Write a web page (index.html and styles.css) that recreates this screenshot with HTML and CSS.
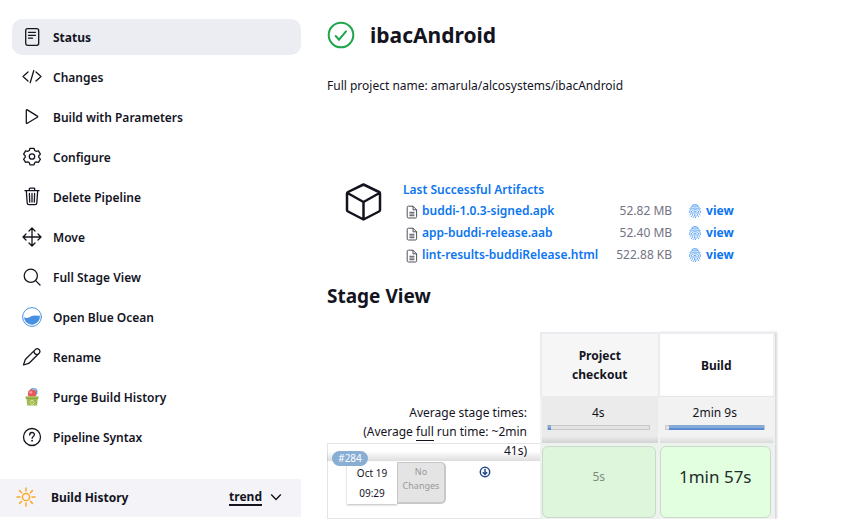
FILE: index.html
```html
<!DOCTYPE html>
<html lang="en">
<head>
<meta charset="utf-8">
<title>ibacAndroid</title>
<link rel="stylesheet" href="styles.css">
</head>
<body>
<svg class="defs" width="0" height="0" aria-hidden="true">
  <symbol id="file" viewBox="0 0 12 14">
    <path d="M2.5 1.2H7l3.6 3.6v6.900a1.300 1.300 0 0 1-1.300 1.300H2.500a1.300 1.300 0 0 1-1.300-1.300V2.500a1.300 1.300 0 0 1 1.300-1.300zM7 1.200v3.600h3.600M3.400 7.300h5M3.400 9h5M3.400 10.700h5" fill="none" stroke="#3c3c49" stroke-width=".9"/>
  </symbol>
  <symbol id="finger" viewBox="0 0 24 28">
    <g fill="none" stroke="currentColor" stroke-width="1.300" stroke-linecap="round">
      <path d="M6 3C10 .5 14 .5 18 3M1.500 9.500C4 5.500 8 4.200 12 4.200s8 1.300 10.500 5.300M1 17c0-6 4-9 11-9s11 3 11 9M2 22c2.500-2 2.500-4 2.500-5.500C4.500 13 8 11.500 12 11.500s7.500 1.500 7.500 5c0 2 0 3.500 2.500 5.500M4.500 25.500C8 22 8 19 8 17c0-2.500 8-2.500 8 0 0 3 .5 5.500 3.500 8.500M8.500 27.200c3-3 3.500-6.500 3.500-10M13 27.500c.7-1.500 1-3 1-4.500"/>
    </g>
  </symbol>
</svg>
<div class="page">
  <aside class="side">
    <nav class="tasks">
      <a class="task current" href="#"><svg viewBox="0 0 20 20"><rect x="3.700" y="1.700" width="13" height="16.600" rx="2"/><path d="M6.500 5.300h7M6.500 8.300h7M6.500 11.200h4"/></svg>Status</a>
      <a class="task" href="#"><svg viewBox="0 0 20 20"><path d="M6 5 1 9.500 6 14M14 5l5 4.500-5 4.500M11.800 3.500 8.200 15.700"/></svg>Changes</a>
      <a class="task" href="#"><svg viewBox="0 0 20 20"><path d="M4.300 3.400v12.400q0 1 1 .5l10-6q.8-.6 0-1.200l-10-6.200q-1-.5-1 .5z"/></svg>Build with Parameters</a>
      <a class="task" href="#"><svg viewBox="0 0 20 20"><circle cx="10" cy="9.500" r="2.700"/><path d="M8 1.300h4l.7 2.200 1.300.8 2.400-.5 2 3.300-1.600 1.700v1.600l1.600 1.700-2 3.300-2.400-.5-1.300.8-.7 2.200H8l-.7-2.200-1.300-.8-2.400.5-2-3.300 1.600-1.700V8.800L1.600 7.100l2-3.300 2.400.5 1.300-.8z"/></svg>Configure</a>
      <a class="task" href="#"><svg viewBox="0 0 20 20"><path d="M3 3.700h14M4.300 3.700l.9 12.300q.1 1.700 1.800 1.700h6q1.700 0 1.800-1.700l.9-12.300M7.300 3.400V2q0-.8.800-.8h3.800q.8 0 .8.800v1.400M7.400 6.500l.3 8.500M10 6.500V15M12.600 6.500l-.3 8.500"/></svg>Delete Pipeline</a>
      <a class="task" href="#"><svg viewBox="0 0 20 20"><path d="M10 1.300v17.400M1.300 10h17.400M7 4l3-3 3 3M7 16l3 3 3-3M4 7l-3 3 3 3M16 7l3 3-3 3"/></svg>Move</a>
      <a class="task" href="#"><svg viewBox="0 0 20 20"><circle cx="8.800" cy="8.800" r="6.600"/><path d="m13.600 13.600 4.400 4.400"/></svg>Full Stage View</a>
      <a class="task" href="#"><svg class="ocean" viewBox="0 0 20 20"><circle cx="10" cy="10" r="9.400"/><path class="wave" d="M2.300 10.300c3 1.600 4.700 0 7-1.100 3-1.400 5-.6 8.600-.4A8 8 0 0 1 2.300 12z"/></svg>Open Blue Ocean</a>
      <a class="task" href="#"><svg viewBox="0 0 20 20"><path d="M13.300 2.600 4 11.700q-.8.800-1.100 1.900L1.500 18l4.400-1.400q1.100-.3 1.900-1.100l9.300-9.300c2.300-2.500-1.300-6.100-3.800-3.600zM12 4q0 3.500 3.700 3.700"/></svg>Rename</a>
      <a class="task" href="#"><svg class="basket" viewBox="0 0 20 20"><circle cx="11.500" cy="5" r="4" fill="#5d9bd5"/><path d="M9.500 3q2-2 4 0" stroke="#c5dff5" fill="none"/><circle cx="10" cy="6.700" r="4.100" fill="#e8575a"/><circle cx="8.800" cy="5.300" r="1.500" fill="#f59a98"/><path d="M4.500 11h11.300l-.7 7.600h-9.900z" fill="#a3b951"/><path d="M3.700 9.400h12.700v2.600H3.700z" fill="#8daa3c"/><path d="M4 9.900h12" stroke="#bdd078"/><path d="m8.300 15 1.700-2 1.800 2M12 16l-1.500 1.400M8.500 16l.8 1.300" stroke="#dce8b3" fill="none"/></svg>Purge Build History</a>
      <a class="task" href="#"><svg viewBox="0 0 20 20"><circle cx="10" cy="10" r="8.500"/><path d="M7.700 8c0-3.300 4.700-3.200 4.700-.4 0 1.800-2.300 1.900-2.300 3.700"/><circle class="dot" cx="10.100" cy="13.700" r=".9"/></svg>Pipeline Syntax</a>
    </nav>
    <section class="history">
      <svg class="sun" viewBox="0 0 20 20"><circle cx="10" cy="10" r="3.600"/><path d="M10 1v3M10 16v3M1 10h3M16 10h3M3.600 3.600l2.100 2.100M14.300 14.300l2.100 2.100M3.600 16.400l2.100-2.100M14.300 5.700l2.100-2.100"/></svg>
      <h2>Build History</h2>
      <a href="#">trend</a>
      <button type="button" aria-label="Collapse"><svg viewBox="0 0 10 10"><path d="m1 3 4 4 4-4"/></svg></button>
    </section>
  </aside>
  <main class="main">
    <header class="title">
      <svg viewBox="0 0 28 28"><circle cx="14" cy="14" r="12.300"/><path d="m8.700 15 3.300 3.700 7-8.400"/></svg>
      <h1>ibacAndroid</h1>
    </header>
    <p class="fullname">Full project name: amarula/alcosystems/ibacAndroid</p>
    <section class="artifacts">
      <svg class="cube" viewBox="0 0 40 40"><path d="M20.500 2.500 36 10q1 .5 1 1.500v16.500q0 1-1 1.500L20.500 37.500 5 29.500q-1-.5-1-1.500V11.500q0-1 1-1.500zM4.500 11 20.500 20l16-9M20.500 20v17.500"/></svg>
      <div>
        <a class="heading" href="#">Last Successful Artifacts</a>
        <table class="files">
          <tr><td><svg class="file"><use href="#file"/></svg></td><td><a href="#">buddi-1.0.3-signed.apk</a></td><td class="size">52.82 MB</td><td class="print"><a href="#" aria-label="Fingerprint"><svg><use href="#finger"/></svg></a></td><td><a class="view" href="#">view</a></td></tr>
          <tr><td><svg class="file"><use href="#file"/></svg></td><td><a href="#">app-buddi-release.aab</a></td><td class="size">52.40 MB</td><td class="print"><a href="#" aria-label="Fingerprint"><svg><use href="#finger"/></svg></a></td><td><a class="view" href="#">view</a></td></tr>
          <tr><td><svg class="file"><use href="#file"/></svg></td><td><a href="#">lint-results-buddiRelease.html</a></td><td class="size">522.88 KB</td><td class="print"><a href="#" aria-label="Fingerprint"><svg><use href="#finger"/></svg></a></td><td><a class="view" href="#">view</a></td></tr>
        </table>
      </div>
    </section>
    <h2 class="subtitle">Stage View</h2>
    <table class="stages">
      <colgroup><col class="runs"><col><col></colgroup>
      <tr class="names"><td></td><th class="odd" scope="col">Project checkout</th><th class="last" scope="col">Build</th></tr>
      <tr class="averages">
        <td class="legend"><div>Average stage times:<br>(Average <span>full</span> run time: ~2min 41s)</div></td>
        <td class="odd">4s<div class="bar"><i style="width:3%"></i></div></td>
        <td class="last">2min 9s<div class="bar"><i style="width:96%"></i></div></td>
      </tr>
      <tr class="run">
        <td class="build">
          <a class="badge" href="#">#284</a>
          <div class="info">
            <div class="date">Oct 19<br>09:29</div>
            <div class="changes">No Changes</div>
            <svg class="download" viewBox="0 0 12 12"><circle cx="6" cy="6" r="4.700"/><path d="M6 3v5.500M3.800 6.300 6 8.500l2.200-2.200"/></svg>
          </div>
        </td>
        <td class="odd"><div class="cell faded">5s</div></td>
        <td class="last"><div class="cell big">1min 57s</div></td>
      </tr>
    </table>
  </main>
</div>
</body>
</html>
```
FILE: styles.css
```css
* { box-sizing: border-box; }
body {
  margin: 0;
  background: #fff;
  color: #14141f;
  font: 12px/19px "Noto Sans", "Open Sans", sans-serif;
}
h1, h2, p { margin: 0; }
a { color: #0b75f0; font-weight: 600; text-decoration: none; }
svg { display: block; flex: none; }
.defs { position: absolute; }
.page { display: flex; }

/* Sidebar */
.side { flex: 0 0 301px; padding-top: 19px; }
.tasks { display: grid; gap: 4px; padding-left: 12px; }
.task {
  display: flex;
  align-items: center;
  gap: 11px;
  height: 36px;
  padding-left: 10px;
  border-radius: 10px;
  color: #14141f;
}
.task.current { background: #ecedf3; font-weight: 700; }
.task svg { width: 20px; height: 20px; fill: none; stroke: #14141f; stroke-width: 1.3; stroke-linecap: round; stroke-linejoin: round; }
.task .dot { fill: #14141f; stroke: none; }
.task .ocean { stroke: #4a90e2; stroke-width: 1; }
.task .wave { fill: #4a90e2; stroke: none; }
.task .basket { stroke: none; stroke-width: 1; }
.history {
  display: flex;
  align-items: center;
  height: 38px;
  margin-top: 24px;
  padding: 0 19px 2px 16px;
  background: #f3f3f8;
}
.history h2 { flex: 1; margin-left: 15px; font-size: 12px; line-height: 19px; }
.history a { border-bottom: 2px solid #14141f; color: #14141f; font-weight: 700; line-height: 15px; }
.history button { margin-left: 8px; padding: 0; border: 0; background: none; }
.history button svg { width: 12px; height: 12px; fill: none; stroke: #14141f; stroke-width: 1.2; }
.sun { width: 20px; height: 20px; fill: none; stroke: #fbaa27; stroke-width: 1.5; stroke-linecap: round; }

/* Project page */
.main { flex: 1; min-width: 0; padding: 19px 26px 0; }
.title { display: flex; align-items: center; gap: 15px; height: 32px; }
.title svg { width: 28px; height: 28px; fill: none; stroke: #1ea64b; stroke-width: 2; stroke-linecap: round; }
h1 { font-size: 21px; line-height: 32px; }
.fullname { margin-top: 25px; }
.artifacts { display: flex; gap: 20px; margin-top: 85px; padding-left: 16px; }
.cube { width: 40px; height: 40px; margin-top: 2px; fill: none; stroke: #14141f; stroke-width: 2.5; stroke-linejoin: round; }
.heading { display: block; line-height: 20px; }
.files { border-spacing: 0; line-height: 22px; }
.files td { height: 22px; padding: 0; white-space: nowrap; }
.file { width: 12px; height: 14px; margin: 2px 4px 0 3px; }
.files .size { padding-left: 18px; color: #737385; text-align: right; }
.print { color: #0b75f0; }
.files .print { padding: 0 5px 0 17px; }
.print svg { width: 12px; height: 14px; }
.files .view { font-weight: 700; }
.subtitle { margin-top: 16px; font-size: 19px; line-height: 28px; }

/* Stage table */
.stages { width: 448px; margin-top: 22px; border-spacing: 0; table-layout: fixed; text-align: center; }
.stages .runs { width: 213px; }
.stages td, .stages th { padding: 0; }
.names { height: 65px; }
.names th { padding: 0 22px; border: 1px solid #ececf0; border-width: 2px 0 1px 2px; }
.odd { background: #f6f6f6; }
.stages .last { box-shadow: 2px 0 2px #d8d8dc; border-right: 2px solid #f0f0f4; }
.averages { height: 46px; vertical-align: top; }
.averages .odd, .averages .last {
  padding: 6px 8px 0 5px;
  border-left: 2px solid #f2f2f4;
  background: linear-gradient(#ebebeb 85%, #d2d2d2);
}
.averages .last { background: linear-gradient(#f2f2f2 85%, #dcdcdc); }
.bar { height: 5px; margin-top: 3px; border: 1px solid #c8c8c8; background: #e2e2e2; }
.bar i { display: block; height: 5px; margin-top: -1px; background: linear-gradient(#86acd6 50%, #5c8bd8 50%); }
.last .bar i { margin-left: auto; }
.legend { position: relative; }
.legend div {
  position: absolute;
  inset: 0 0 auto;
  z-index: 1;
  padding: 6px 13px 1px 20px;
  background: linear-gradient(transparent 85%, #0002);
  text-align: right;
}
.legend span { border-bottom: 1px solid; }
.run { height: 76px; vertical-align: top; }
.build { position: relative; border: 1px solid #e4e4e8; border-width: 1px 0 1px 1px; }
.badge {
  position: absolute;
  z-index: 2;
  top: 7px;
  left: 4px;
  width: 36px;
  border-radius: 8px;
  background: #88aed4;
  color: #fff;
  font-size: 10px;
  font-weight: 400;
  line-height: 15px;
}
.info { display: flex; padding: 18px 0 0 19px; font-size: 10px; line-height: 20px; }
.date { position: relative; z-index: 1; width: 50px; height: 42px; padding-top: 1px; background: #fff; box-shadow: 0 1px 2px #bbb; }
.changes { position: relative; z-index: 1; width: 49px; height: 42px; padding-top: 2px; border: 2px solid #c8c8c8; border-width: 1px 2px 2px 1px; border-radius: 0 5px 5px 0; background: #e4e4e4; color: #999; font-size: 9px; line-height: 14px; }
.download { width: 12px; height: 12px; margin: 4px 0 0 33px; fill: none; stroke: #234a87; stroke-width: 1.5; }
.run .odd, .run .last { padding: 3px 2px 1px; background: #ebf3ec; }
.cell { height: 72px; border: 1px solid #cbd8cc; border-radius: 6px; background: #ddf6dc; line-height: 60px; }
.faded { color: #7f8b80; }
.big { background: #e2ffe0; color: #222d2b; font-size: 17px; }
```
